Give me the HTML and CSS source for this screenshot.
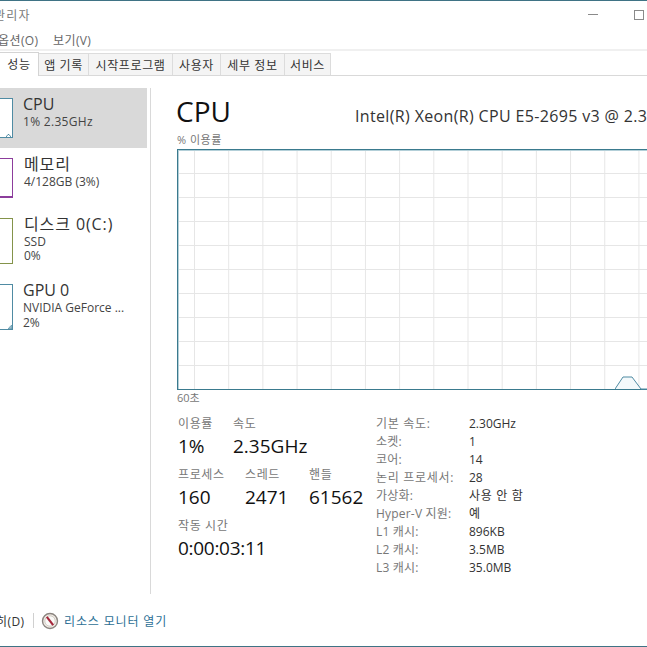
FILE: index.html
```html
<!DOCTYPE html>
<html lang="ko">
<head>
<meta charset="utf-8">
<title>작업 관리자</title>
<link rel="stylesheet" href="styles.css">
</head>
<body>
<div class="window">
  <header class="titlebar">
    <span class="title">관리자</span>
    <div class="controls"><span class="minimize"></span><span class="maximize"></span></div>
  </header>
  <nav class="menu"><span class="menu-first">옵션(O)</span><span>보기(V)</span></nav>
  <div class="tabs">
    <span class="tab tab-active">성능</span>
    <span class="tab tab-w1">앱 기록</span>
    <span class="tab tab-w2">시작프로그램</span>
    <span class="tab tab-w3">사용자</span>
    <span class="tab tab-w4">세부 정보</span>
    <span class="tab tab-w5">서비스</span>
  </div>
  <main class="main">
    <aside class="sidebar">
      <div class="item item-cpu selected">
        <div class="thumb thumb-cpu"><svg class="tick" width="5" height="3" viewBox="0 0 5 3"><path d="M0 3 L2 0.5 L3 0.5 L5 3" fill="none" stroke="#4f8ba3"/></svg></div>
        <div class="item-text"><div class="item-name">CPU</div><div class="item-sub">1% 2.35GHz</div></div>
      </div>
      <div class="item item-mem">
        <div class="thumb thumb-mem"></div>
        <div class="item-text"><div class="item-name name-ko">메모리</div><div class="item-sub">4/128GB (3%)</div></div>
      </div>
      <div class="item item-disk">
        <div class="thumb thumb-disk"></div>
        <div class="item-text"><div class="item-name name-ko">디스크 0(C:)</div><div class="item-sub">SSD</div><div class="item-sub sub-last">0%</div></div>
      </div>
      <div class="item item-gpu">
        <div class="thumb thumb-gpu"><svg class="tick" width="4" height="4" viewBox="0 0 4 4"><path d="M0 4 L3 0.5 L4 0.5 L4 4 Z" fill="#9dbdca" stroke="#4f8ba3" stroke-width="0.6"/></svg></div>
        <div class="item-text"><div class="item-name">GPU 0</div><div class="item-sub">NVIDIA GeForce ...</div><div class="item-sub">2%</div></div>
      </div>
    </aside>
    <section class="content">
      <div class="head">
        <h1 class="head-title">CPU</h1>
        <div class="head-model">Intel(R) Xeon(R) CPU E5-2695 v3 @ 2.30GHz</div>
      </div>
      <div class="graph-label">% 이용률</div>
      <div class="graph">
        <svg class="peak" width="60" height="20" viewBox="0 0 60 20"><path d="M0 15 L8 3 L17 3 L26 15 L60 15" fill="#f4f9fb" stroke="#4f8ba3" stroke-width="1"/></svg>
      </div>
      <div class="graph-foot">60초</div>
      <div class="details">
        <div class="stats">
          <div class="stat-row stat-row-a">
            <div class="stat stat-a1"><div class="label">이용률</div><div class="value">1%</div></div>
            <div class="stat"><div class="label">속도</div><div class="value">2.35GHz</div></div>
          </div>
          <div class="stat-row stat-row-b">
            <div class="stat stat-b1"><div class="label">프로세스</div><div class="value">160</div></div>
            <div class="stat stat-b2"><div class="label">스레드</div><div class="value">2471</div></div>
            <div class="stat"><div class="label">핸들</div><div class="value">61562</div></div>
          </div>
          <div class="stat-row">
            <div class="stat"><div class="label">작동 시간</div><div class="value value-time">0:00:03:11</div></div>
          </div>
        </div>
        <dl class="specs">
          <dt class="ko">기본 속도:</dt><dd>2.30GHz</dd>
          <dt>소켓:</dt><dd>1</dd>
          <dt>코어:</dt><dd>14</dd>
          <dt class="ko">논리 프로세서:</dt><dd>28</dd>
          <dt>가상화:</dt><dd class="ko">사용 안 함</dd>
          <dt>Hyper-V 지원:</dt><dd>예</dd>
          <dt>L1 캐시:</dt><dd>896KB</dd>
          <dt>L2 캐시:</dt><dd>3.5MB</dd>
          <dt>L3 캐시:</dt><dd>35.0MB</dd>
        </dl>
      </div>
    </section>
  </main>
  <footer class="footer">
    <span class="fewer">히(D)</span>
    <span class="sep"></span>
    <svg class="monitor-icon" width="18" height="18" viewBox="0 0 18 18"><circle cx="9" cy="9" r="7.5" fill="#f1ece6" stroke="#8b8580" stroke-width="1.4"/><circle cx="9" cy="9" r="5.2" fill="#fbfaf8" stroke="#c9c2ba" stroke-width="0.8"/><path d="M5.8 4.8 L12.2 13.2" stroke="#a5283c" stroke-width="2.2"/></svg>
    <span class="link">리소스 모니터 열기</span>
  </footer>
</div>
</body>
</html>
```
FILE: styles.css
```css
* { box-sizing: border-box; }
html, body { margin: 0; padding: 0; background: #fff; }
body { font-family: "Open Sans", "Noto Sans CJK KR", sans-serif; }
.window {
  width: 647px; height: 647px; overflow: hidden; background: #fff;
  display: flex; flex-direction: column;
  border-top: 1px solid #3f7385; border-bottom: 1px solid #3f7385;
}
.titlebar { height: 29px; display: flex; justify-content: space-between; align-items: center; flex: none; }
.title { font-size: 12px; color: #7a7a7a; margin-left: -6px; margin-top: -1px; letter-spacing: 1.2px; }
.controls { display: flex; align-items: center; margin-top: -2px; }
.minimize { width: 10px; height: 1px; background: #8a8a8a; margin-right: 36px; }
.maximize { width: 10px; height: 10px; border: 1px solid #8a8a8a; margin-right: 3px; }
.menu { height: 21px; display: flex; align-items: center; font-size: 12px; color: #666; border-bottom: 2px solid #f0f0f0; flex: none; padding-bottom: 0; letter-spacing: 0.4px; }
.menu-first { margin-left: -2px; width: 55px; }
.tabs { height: 25px; display: flex; align-items: flex-end; border-bottom: 1px solid #d9d9d9; flex: none; padding-left: 0; }
.tab { height: 22px; font-size: 12px; color: #333; background: #f4f4f4; border: 1px solid #dcdcdc; border-left: 0; border-bottom: 0; display: flex; align-items: center; justify-content: center; letter-spacing: 0.6px; }
.tab-active { width: 39px; height: 24px; background: #fff; margin-bottom: -1px; padding-bottom: 2px; border-color: #d4d4d4; }
.tab-w1 { width: 50px; }
.tab-w2 { width: 84px; }
.tab-w3 { width: 48px; }
.tab-w4 { width: 64px; }
.tab-w5 { width: 46px; }
.main { flex: 1; display: flex; min-height: 0; padding-top: 12px; }
.sidebar { width: 151px; flex: none; border-right: 1px solid #d9d9d9; margin-bottom: 3px; background: linear-gradient(#fff 10px, transparent 10px) right top / 1px 100% no-repeat; }
.item { display: flex; width: 147px; align-items: flex-start; }
.item-cpu { height: 60px; padding-top: 10px; }
.item-mem { height: 60px; padding-top: 10px; }
.item-disk { height: 66px; padding-top: 10px; }
.item-gpu { height: 66px; padding-top: 10px; }
.selected { background: #d9d9d9; }
.thumb { width: 14px; flex: none; margin-left: -1px; border: 1px solid; border-left: 0; background: #fff; display: flex; align-items: flex-end; justify-content: flex-end; }
.tick { display: block; }
.thumb-cpu { height: 40px; border-color: #4f8ba3; }
.thumb-cpu .tick { margin-right: 1px; }
.thumb-mem { height: 40px; border-color: #8c3d9c; border-bottom-width: 2px; }
.thumb-disk { height: 46px; border-color: #84934a; }
.thumb-gpu { height: 46px; border-color: #4f8ba3; }
.item-text { margin-left: 10px; }
.item-cpu .item-text { margin-top: -5px; }
.item-cpu .item-sub { margin-top: -1px; letter-spacing: 0.3px; }
.item-gpu .item-text { margin-top: -5px; }
.item-gpu .item-sub:nth-child(2) { margin-top: -1px; }
.item-mem .item-text { margin-top: -5px; margin-left: 11px; }
.item-mem .item-sub { margin-top: -1px; }
.item-disk .item-text { margin-top: -5px; margin-left: 11px; }
.item-disk .item-sub:nth-child(2) { margin-top: -1px; }
.item-disk .sub-last { margin-top: -1px; }
.item-name { font-size: 16px; line-height: 22px; color: #333; }
.name-ko { letter-spacing: 0.9px; }
.item-sub { font-size: 12px; line-height: 15px; color: #444; }
.content { flex: 1; min-width: 0; padding-left: 26px; }
.head { display: flex; align-items: baseline; height: 42px; white-space: nowrap; padding-top: 2px; }
.head-title { font-size: 28px; font-weight: 400; margin: 0 0 0 -1px; width: 179px; flex: none; line-height: 42px; color: #111; }
.head-model { font-size: 16px; color: #333; letter-spacing: 0.35px; flex: none; }
.graph-label { font-size: 11px; line-height: 16px; color: #777; height: 19px; padding-top: 2px; letter-spacing: 0.5px; }
.graph {
  width: 480px; height: 241px; border: 1px solid #3a7a8e; position: relative;
  background-color: #fff;
  background-image: linear-gradient(#e6e6e6 1px, transparent 1px), linear-gradient(90deg, #e6e6e6 1px, transparent 1px);
  background-size: 100% 24px, 34.2px 100%;
  background-position: 0 23px, 16px 0;
  box-shadow: inset 1px 1px 0 #b3cfd8;
}
.peak { position: absolute; left: 437px; top: 224px; }
.graph-foot { font-size: 11px; line-height: 16px; color: #777; margin-top: 0; height: 21px; }
.details { display: flex; }
.stats { width: 199px; flex: none; padding-left: 1px; padding-top: 4px; }
.stat-row { display: flex; height: 51px; white-space: nowrap; }
.stat-row-a .stat-a1 { width: 55px; }
.stat-b1 { width: 67px; }
.stat-b2 { width: 64px; }
.label { font-size: 12px; line-height: 18px; color: #777; letter-spacing: 0.6px; }
.value { font-size: 19px; line-height: 26px; color: #111; }
.value-time { letter-spacing: -0.3px; }
.specs { margin: 4px 0 0; display: grid; grid-template-columns: 93px 1fr; grid-auto-rows: 18px; font-size: 12px; line-height: 18px; align-self: flex-start; }
.specs dt { color: #777; letter-spacing: 0.2px; white-space: nowrap; }
.specs dd { margin: 0; color: #333; white-space: nowrap; }
.specs .ko { letter-spacing: 0.7px; }
.footer { height: 49px; flex: none; display: flex; align-items: center; font-size: 12px; padding-bottom: 2px; }
.fewer { color: #333; margin-left: -4px; width: 37px; letter-spacing: 0.4px; }
.sep { width: 1px; height: 15px; background: #d0d0d0; margin-right: 7px; }
.monitor-icon { margin-right: 5px; }
.link { color: #2d6f95; letter-spacing: 0.85px; }
```
